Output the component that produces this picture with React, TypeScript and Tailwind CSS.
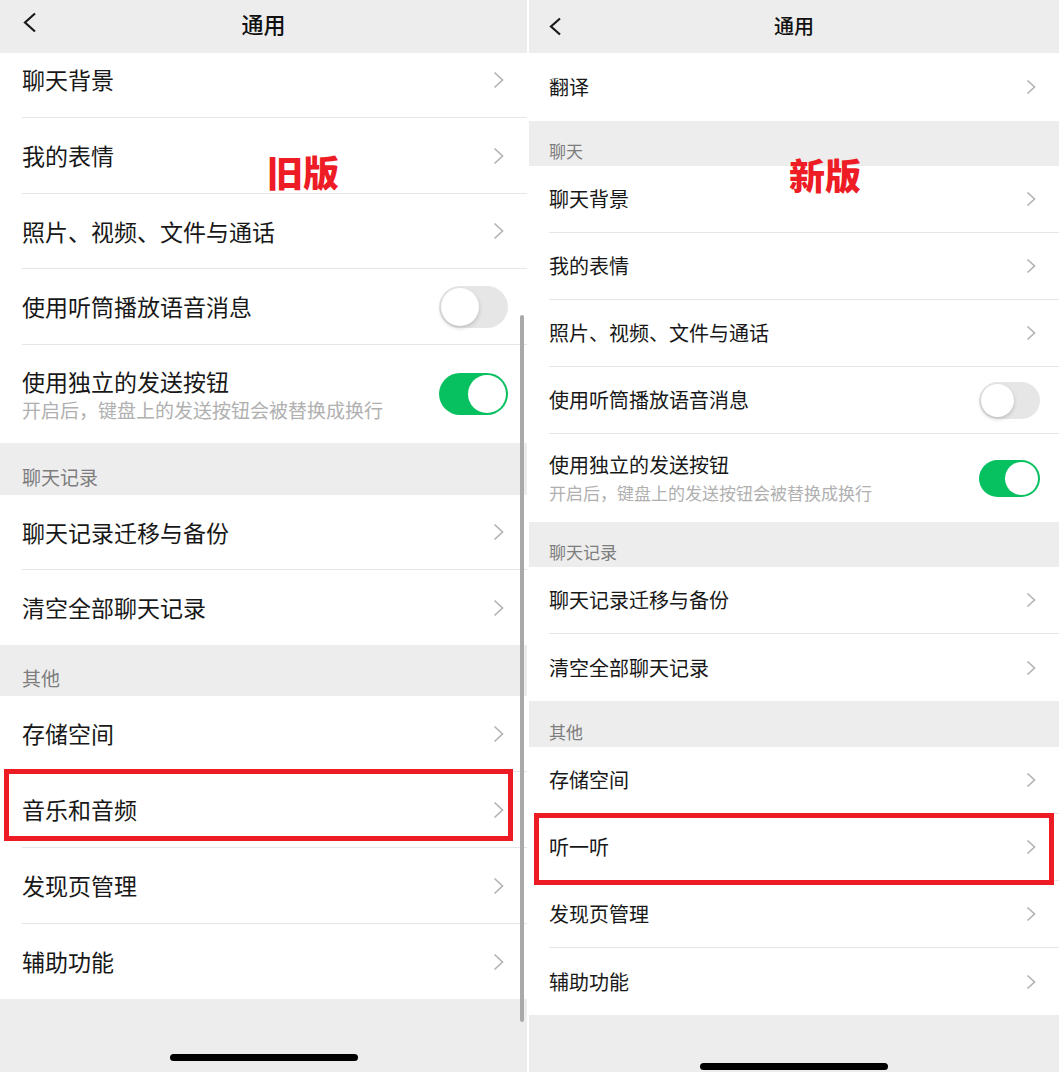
import React from "react";

type Item =
  | { kind: "section"; label: string; h: string }
  | {
      kind: "row";
      label: string;
      h: string;
      sub?: string;
      toggle?: "on" | "off";
      last?: boolean;
      mark?: boolean;
    };

interface Theme {
  headerH: string;
  headerPad: string;
  backPl: string;
  backW: number;
  backH: number;
  title: string;
  pl: string;
  rowText: string;
  subText: string;
  subGap: string;
  subPt: string;
  secText: string;
  secPb: string;
  chevW: number;
  chevH: number;
  chevPr: string;
  togglePr: string;
  toggle: string;
  knob: string;
  mark: string;
  homeMb: string;
}

const oldTheme: Theme = {
  headerH: "h-[53px]",
  headerPad: "pb-[8px]",
  backPl: "pl-[23px]",
  backW: 14,
  backH: 21,
  title: "text-[22px]",
  pl: "pl-[22px]",
  rowText: "text-[23px]",
  subText: "text-[19px]",
  subGap: "gap-[7px]",
  subPt: "pt-[25px]",
  secText: "text-[19px]",
  secPb: "pb-[9px]",
  chevW: 11,
  chevH: 18,
  chevPr: "pr-[23px]",
  togglePr: "pr-[19px]",
  toggle: "w-[69px] h-[42px]",
  knob: "w-[38px] h-[38px]",
  mark: "left-[4px] -top-[3px] w-[509px] h-[72px]",
  homeMb: "mb-[11px]",
};

const newTheme: Theme = {
  headerH: "h-[53px]",
  headerPad: "pb-[1px]",
  backPl: "pl-[20px]",
  backW: 13,
  backH: 19,
  title: "text-[20px]",
  pl: "pl-[20px]",
  rowText: "text-[20px]",
  subText: "text-[17px]",
  subGap: "gap-[9px]",
  subPt: "pt-[21px]",
  secText: "text-[17px]",
  secPb: "pb-[7px]",
  chevW: 10,
  chevH: 16,
  chevPr: "pr-[23px]",
  togglePr: "pr-[19px]",
  toggle: "w-[61px] h-[37px]",
  knob: "w-[33px] h-[33px]",
  mark: "left-[5px] -top-[1px] w-[520px] h-[72px]",
  homeMb: "mb-[2px]",
};

const oldItems: Item[] = [
  { kind: "row", label: "聊天背景", h: "h-[76px]" },
  { kind: "row", label: "我的表情", h: "h-[76px]" },
  { kind: "row", label: "照片、视频、文件与通话", h: "h-[75px]" },
  { kind: "row", label: "使用听筒播放语音消息", h: "h-[76px]", toggle: "off" },
  {
    kind: "row",
    label: "使用独立的发送按钮",
    sub: "开启后，键盘上的发送按钮会被替换成换行",
    h: "h-[98px]",
    toggle: "on",
    last: true,
  },
  { kind: "section", label: "聊天记录", h: "h-[52px]" },
  { kind: "row", label: "聊天记录迁移与备份", h: "h-[75px]" },
  { kind: "row", label: "清空全部聊天记录", h: "h-[75px]", last: true },
  { kind: "section", label: "其他", h: "h-[51px]" },
  { kind: "row", label: "存储空间", h: "h-[76px]" },
  { kind: "row", label: "音乐和音频", h: "h-[76px]", mark: true },
  { kind: "row", label: "发现页管理", h: "h-[76px]" },
  { kind: "row", label: "辅助功能", h: "h-[75px]", last: true },
];

const newItems: Item[] = [
  { kind: "row", label: "翻译", h: "h-[68px]", last: true },
  { kind: "section", label: "聊天", h: "h-[45px]" },
  { kind: "row", label: "聊天背景", h: "h-[67px]" },
  { kind: "row", label: "我的表情", h: "h-[67px]" },
  { kind: "row", label: "照片、视频、文件与通话", h: "h-[67px]" },
  { kind: "row", label: "使用听筒播放语音消息", h: "h-[67px]", toggle: "off" },
  {
    kind: "row",
    label: "使用独立的发送按钮",
    sub: "开启后，键盘上的发送按钮会被替换成换行",
    h: "h-[88px]",
    toggle: "on",
    last: true,
  },
  { kind: "section", label: "聊天记录", h: "h-[45px]" },
  { kind: "row", label: "聊天记录迁移与备份", h: "h-[67px]" },
  { kind: "row", label: "清空全部聊天记录", h: "h-[67px]", last: true },
  { kind: "section", label: "其他", h: "h-[46px]" },
  { kind: "row", label: "存储空间", h: "h-[67px]" },
  { kind: "row", label: "听一听", h: "h-[67px]", mark: true },
  { kind: "row", label: "发现页管理", h: "h-[67px]" },
  { kind: "row", label: "辅助功能", h: "h-[67px]", last: true },
];

function Chevron({ w, h }: { w: number; h: number }) {
  return (
    <svg width={w} height={h} viewBox={`0 0 ${w} ${h}`} fill="none">
      <polyline
        points={`1.5,1.5 ${w - 1.5},${h / 2} 1.5,${h - 1.5}`}
        stroke="#b4b4b4"
        strokeWidth="1.7"
        strokeLinejoin="miter"
      />
    </svg>
  );
}

function Back({ w, h }: { w: number; h: number }) {
  return (
    <svg width={w} height={h} viewBox={`0 0 ${w} ${h}`} fill="none">
      <polyline
        points={`${w - 2},1.5 2,${h / 2} ${w - 2},${h - 1.5}`}
        stroke="#1a1a1a"
        strokeWidth="2.2"
      />
    </svg>
  );
}

function Toggle({ on, t }: { on: boolean; t: Theme }) {
  return (
    <div
      className={`${t.toggle} flex items-center rounded-full p-[2px] ${
        on ? "justify-end bg-[#07c160]" : "justify-start bg-[#e6e6e6]"
      }`}
    >
      <div
        className={`${t.knob} rounded-full bg-white ${
          on ? "" : "shadow-[0_2px_4px_rgba(0,0,0,0.18)]"
        }`}
      />
    </div>
  );
}

function Row({ item, t }: { item: Extract<Item, { kind: "row" }>; t: Theme }) {
  return (
    <div className={`relative flex bg-white ${item.h} ${t.pl}`}>
      <div
        className={`flex flex-1 justify-between ${
          item.last ? "" : "border-b border-[#e6e6e6]"
        } ${item.sub ? "" : "items-center"}`}
      >
        {item.sub ? (
          <div className={`flex flex-col ${t.subGap} ${t.subPt}`}>
            <span className={`${t.rowText} leading-none text-[#181818]`}>{item.label}</span>
            <span className={`${t.subText} leading-none text-[#b0b0b0]`}>{item.sub}</span>
          </div>
        ) : (
          <span className={`${t.rowText} leading-none text-[#181818]`}>{item.label}</span>
        )}
        {item.toggle ? (
          <div className={`flex items-center ${t.togglePr}`}>
            <Toggle on={item.toggle === "on"} t={t} />
          </div>
        ) : (
          <div className={`flex items-center ${t.chevPr}`}>
            <Chevron w={t.chevW} h={t.chevH} />
          </div>
        )}
      </div>
      {item.mark && (
        <div className={`absolute z-10 ${t.mark} border-[5px] border-[#ed1c24]`} />
      )}
    </div>
  );
}

function Panel({
  t,
  items,
  badge,
  width,
  offset,
  children,
}: {
  t: Theme;
  items: Item[];
  badge: string;
  width: string;
  offset: string;
  children?: React.ReactNode;
}) {
  return (
    <div className={`relative flex h-[1072px] ${width} flex-col overflow-hidden bg-[#ededed]`}>
      <div className={`grid ${t.headerH} grid-cols-[1fr_auto_1fr] items-center ${t.headerPad}`}>
        <div className={`flex ${t.backPl}`}>
          <Back w={t.backW} h={t.backH} />
        </div>
        <span className={`${t.title} font-medium leading-none text-[#111]`}>通用</span>
        <div />
      </div>
      <div className="flex-1 overflow-hidden">
        <div className={`flex flex-col ${offset}`}>
          {items.map((it, i) =>
            it.kind === "section" ? (
              <div key={i} className={`flex items-end ${it.h} ${t.pl} ${t.secPb}`}>
                <span className={`${t.secText} leading-none text-[#7d7d7d]`}>{it.label}</span>
              </div>
            ) : (
              <Row key={i} item={it} t={t} />
            )
          )}
        </div>
      </div>
      <div className={`flex justify-center ${t.homeMb}`}>
        <div className="h-[7px] w-[188px] rounded-full bg-black" />
      </div>
      <div className={badge}>{children}</div>
    </div>
  );
}

export default function App() {
  return (
    <div className="relative flex h-[1072px] w-[1059px] gap-[2px] bg-white font-['Noto_Sans_CJK_SC',sans-serif]">
      <Panel
        t={oldTheme}
        items={oldItems}
        width="w-[527px]"
        offset="-mt-[11px]"
        badge="absolute z-20 left-[267px] top-[153px] text-[36px] font-black leading-none text-[#ee1c25]"
      >
        旧版
      </Panel>
      <Panel
        t={newTheme}
        items={newItems}
        width="w-[530px]"
        offset=""
        badge="absolute z-20 left-[260px] top-[156px] text-[36px] font-black leading-none text-[#ee1c25]"
      >
        新版
      </Panel>
      <div className="pointer-events-none absolute left-[520px] top-[315px] h-[707px] w-[4px] rounded-full bg-[#a9a9a9]" />
    </div>
  );
}
